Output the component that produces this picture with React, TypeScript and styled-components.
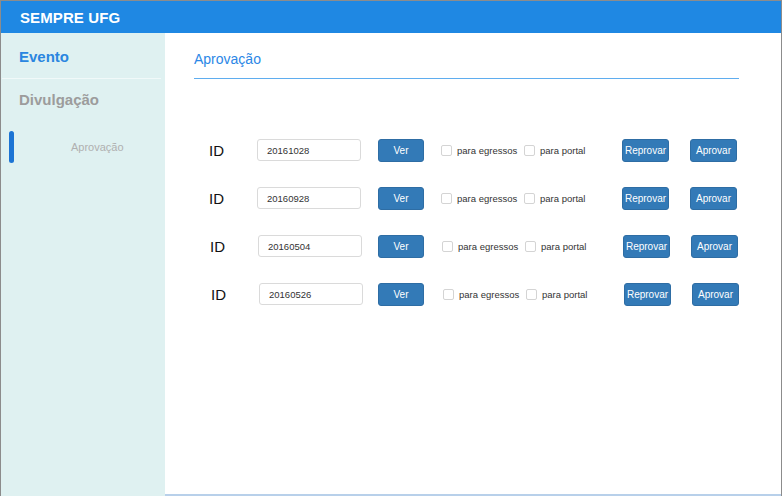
import React from 'react';
import styled, { createGlobalStyle } from 'styled-components';

const GlobalStyle = createGlobalStyle`
  html, body {
    margin: 0;
    padding: 0;
    background: #ffffff;
  }
  body {
    font-family: "Liberation Sans", Arial, sans-serif;
  }
`;

const Frame = styled.div`
  width: 782px;
  height: 496px;
  box-sizing: border-box;
  border-top: 1px solid #8c8c8c;
  border-left: 1px solid #8c8c8c;
  border-right: 1px solid #8c8c8c;
  display: flex;
  flex-direction: column;
  overflow: hidden;
`;

const Header = styled.div`
  height: 32px;
  flex-shrink: 0;
  background-color: #1f88e3;
  display: flex;
  align-items: center;
  padding-left: 19px;
`;

const Brand = styled.span`
  color: #ffffff;
  font-size: 15px;
  font-weight: bold;
  letter-spacing: 0.1px;
`;

const Body = styled.div`
  flex: 1;
  display: flex;
`;

const Sidebar = styled.nav`
  width: 164px;
  flex-shrink: 0;
  background-color: #dff1f1;
  display: flex;
  flex-direction: column;
`;

const MenuItem = styled.div<{ $active?: boolean }>`
  font-size: 15px;
  font-weight: bold;
  line-height: 17px;
  color: ${p => (p.$active ? '#2a86e0' : '#9c9c9c')};
  padding: ${p => (p.$active ? '15px 18px 13px' : '12px 18px 0')};
`;

const Separator = styled.div`
  height: 1px;
  margin: 0 4px 0 1px;
  background-color: #f1f9f9;
`;

const SubItem = styled.div`
  display: flex;
  align-items: center;
  margin-top: 23px;
  padding-left: 8px;
  height: 32px;
`;

const ActiveBar = styled.span`
  width: 5px;
  height: 32px;
  border-radius: 3px;
  background-color: #1c74d4;
`;

const SubLabel = styled.span`
  margin-left: 57px;
  font-size: 11px;
  color: #b0b0b0;
`;

const Main = styled.main`
  flex: 1;
  background-color: #ffffff;
  border-bottom: 2px solid #b8d0ea;
  padding: 18px 0 0 29px;
`;

const Title = styled.h1`
  width: 545px;
  margin: 0;
  padding-bottom: 11px;
  border-bottom: 1px solid #5fadef;
  font-size: 14px;
  font-weight: normal;
  line-height: 16px;
  color: #2b87e6;
`;

const Rows = styled.div`
  margin-top: 47px;
  display: flex;
  flex-direction: column;
`;

const Row = styled.div<{ $dx: number }>`
  height: 48px;
  display: flex;
  align-items: center;
  padding-left: ${p => 15 + p.$dx}px;
`;

const IdLabel = styled.span`
  width: 48px;
  font-size: 15px;
  color: #111111;
`;

const IdInput = styled.div<{ $mr: number }>`
  width: 104px;
  height: 22px;
  box-sizing: border-box;
  border: 1px solid #dadada;
  border-radius: 3px;
  padding-left: 9px;
  display: flex;
  align-items: center;
  font-size: 9.5px;
  color: #333333;
  margin-right: ${p => p.$mr}px;
`;

const BlueButton = styled.button<{ $w: number; $mr?: number }>`
  width: ${p => p.$w}px;
  height: 23px;
  margin-right: ${p => p.$mr ?? 0}px;
  padding: 0;
  border: 1px solid #2e6da4;
  border-radius: 3px;
  background-color: #337ab7;
  color: #ffffff;
  font-family: "Liberation Sans", Arial, sans-serif;
  font-size: 10px;
`;

const CheckOption = styled.label<{ $w: number }>`
  width: ${p => p.$w}px;
  display: flex;
  align-items: center;
  gap: 5px;
  font-size: 9.5px;
  color: #333333;
`;

const CheckBox = styled.span`
  width: 11px;
  height: 11px;
  border: 1px solid #d4d4d4;
  border-radius: 2px;
  background: #ffffff;
  box-sizing: border-box;
`;

const entries = [
  { id: '20161028', dx: 0 },
  { id: '20160928', dx: 0 },
  { id: '20160504', dx: 1 },
  { id: '20160526', dx: 2 },
];

const App: React.FC = () => (
  <>
    <GlobalStyle />
    <Frame>
      <Header>
        <Brand>SEMPRE UFG</Brand>
      </Header>
      <Body>
        <Sidebar>
          <MenuItem $active>Evento</MenuItem>
          <Separator />
          <MenuItem>Divulgação</MenuItem>
          <SubItem>
            <ActiveBar />
            <SubLabel>Aprovação</SubLabel>
          </SubItem>
        </Sidebar>
        <Main>
          <Title>Aprovação</Title>
          <Rows>
            {entries.map(e => (
              <Row key={e.id} $dx={e.dx}>
                <IdLabel>ID</IdLabel>
                {/* the mockup drifts a little per row; Ver stays put */}
                <IdInput $mr={17 - e.dx}>{e.id}</IdInput>
                <BlueButton $w={46} $mr={17 + e.dx}>Ver</BlueButton>
                <CheckOption $w={83}>
                  <CheckBox />
                  para egressos
                </CheckOption>
                <CheckOption $w={98}>
                  <CheckBox />
                  para portal
                </CheckOption>
                <BlueButton $w={47} $mr={21}>Reprovar</BlueButton>
                <BlueButton $w={47}>Aprovar</BlueButton>
              </Row>
            ))}
          </Rows>
        </Main>
      </Body>
    </Frame>
  </>
);

export default App;
